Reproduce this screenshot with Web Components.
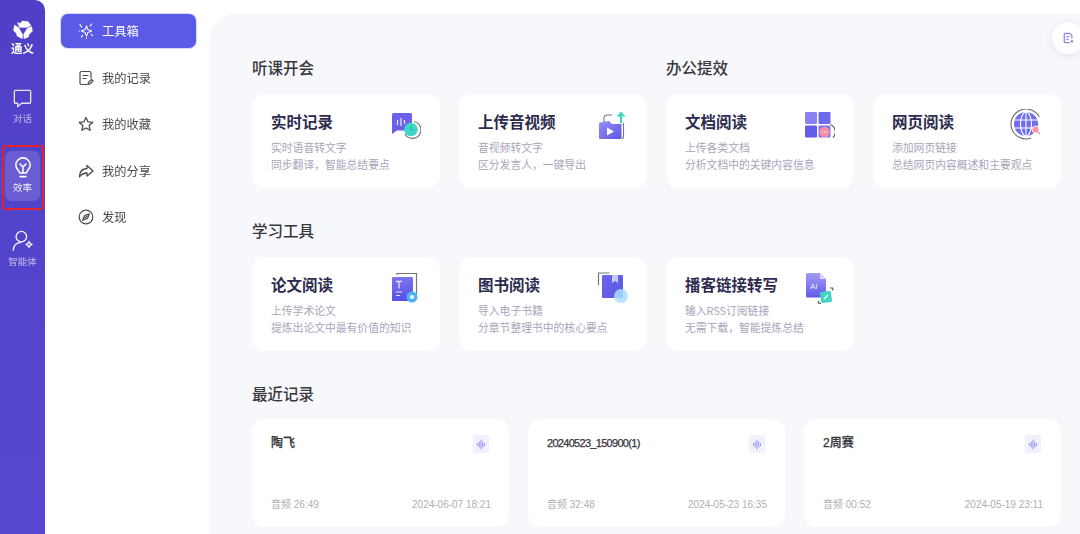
<!DOCTYPE html>
<html lang="zh">
<head>
<meta charset="utf-8">
<title>通义 效率</title>
<style>
  html, body { margin: 0; height: 534px; overflow: hidden; background: #fff; }
  body { font-family: "Noto Sans CJK SC", "Noto Sans", sans-serif; }
  svg { display: block; }
</style>
</head>
<body>
<app-shell>
  <app-rail slot="rail">
    <rail-item>
      <svg slot="icon" width="23" height="23" viewBox="0 0 24 24" fill="none" stroke="#fff" stroke-width="1.400" stroke-linejoin="round" opacity=".85"><path d="M4 4.500a1 1 0 0 1 1-1h15a1 1 0 0 1 1 1V16a1 1 0 0 1-1 1H11.500L7.500 20.500V17H5a1 1 0 0 1-1-1Z" transform="translate(-.5 0)"/></svg>
      对话
    </rail-item>
    <rail-item active>
      <svg slot="icon" width="24" height="24" viewBox="0 0 20 20" fill="none" stroke="#fff" stroke-width="1.300" stroke-linecap="round" stroke-linejoin="round"><path d="M7.200 15c0-1.700-3.200-3-3.200-6.600a6 6 0 0 1 12 0c0 3.600-3.200 4.900-3.200 6.600Z"/><path d="M7.500 7.500 10 10l2.500-2.500M10 10v5M7.500 18h5"/></svg>
      效率
    </rail-item>
    <rail-item style="margin-top:3px">
      <svg slot="icon" width="24" height="24" viewBox="0 0 22 22" fill="none" stroke="#fff" stroke-width="1.300" stroke-linecap="round" opacity=".9"><circle cx="9.500" cy="7" r="4.800"/><path d="M2 19.500c.3-4.200 3.200-6.800 7-7.200"/><path d="M16.500 11.500c.4 1.700 1 2.300 2.700 2.700-1.700.4-2.300 1-2.700 2.700-.4-1.700-1-2.300-2.700-2.700 1.700-.4 2.300-1 2.700-2.700Z" stroke-linejoin="round"/></svg>
      智能体
    </rail-item>
  </app-rail>

  <side-nav slot="nav">
    <nav-item active>
      <svg slot="icon" width="16" height="16" viewBox="0 0 17 17" fill="none" stroke="#fff" stroke-width="1.100" stroke-linecap="round" stroke-linejoin="round"><path d="m9 3 1.500 4 4 1.500-4 1.500L9 14l-1.500-4-4-1.500 4-1.500Z"/><path d="M2 1.500 4 4.500M14.500 1 13 3M1 8.500h.5M15.500 13.500 14 12M3.500 15l1.500-2M9 16v.5"/></svg>
      工具箱
    </nav-item>
    <nav-item>
      <svg slot="icon" width="16" height="16" viewBox="0 0 16 16" fill="none" stroke="#4a4a52" stroke-width="1.200" stroke-linecap="round" stroke-linejoin="round"><path d="M9 14.500H3.500a1.500 1.500 0 0 1-1.500-1.500V3a1.500 1.500 0 0 1 1.500-1.500h8A1.500 1.500 0 0 1 13 3v5"/><path d="M5 5.500h5M5 8.500h3M10 14.500l.5-2 3-3 1.500 1.500-3 3Z"/></svg>
      我的记录
    </nav-item>
    <nav-item>
      <svg slot="icon" width="16" height="16" viewBox="0 0 16 16" fill="none" stroke="#4a4a52" stroke-width="1.300" stroke-linejoin="round"><path d="m8 1.500 2 4.300 4.700.6-3.500 3.200.9 4.700L8 12l-4.100 2.300.9-4.700L1.300 6.400 6 5.800Z"/></svg>
      我的收藏
    </nav-item>
    <nav-item>
      <svg slot="icon" width="16" height="16" viewBox="0 0 16 16" fill="none" stroke="#4a4a52" stroke-width="1.300" stroke-linejoin="round" stroke-linecap="round"><path d="M9 2.500 15 8l-6 5v-3C6 10 3.500 11 1.500 14c0-5 3-8.200 7.500-8.500Z"/></svg>
      我的分享
    </nav-item>
    <nav-item>
      <svg slot="icon" width="16" height="16" viewBox="0 0 16 16" fill="none" stroke="#4a4a52" stroke-width="1.200" stroke-linejoin="round"><circle cx="8" cy="8" r="6.800"/><path d="M11.300 4.700 9.500 9.500 4.700 11.300 6.500 6.500Z"/><path d="M6.500 9.500 9.500 6.500"/></svg>
      发现
    </nav-item>
  </side-nav>

  <main-panel slot="main">
    <tool-grid>
      <section-title>听课开会</section-title>
      <section-title style="grid-column:3 / span 2">办公提效</section-title>

      <tool-card heading="实时记录">
        <svg slot="icon" width="32" height="32" viewBox="0 0 32 32" fill="none">
          <path d="M4.500 4h17A1.500 1.500 0 0 1 23 5.500V20a1.500 1.500 0 0 1-1.500 1.500H8L3 25V5.500A1.500 1.500 0 0 1 4.500 4Z" fill="#6d5fe8"/>
          <path d="M8.500 11v5M12 9v8M15.500 11v4" stroke="#fff" stroke-width="1.200" opacity=".85"/>
          <path d="M25 12.500a8.500 8.500 0 1 1-9 12.500" stroke="#77777a" stroke-width="1.200"/>
          <circle cx="22" cy="20.500" r="6.800" fill="#3fd8c6"/>
          <path d="M22 16.500v4.200l2.500 1.300" stroke="#23a69e" stroke-width=".9"/>
        </svg>
        <span>实时语音转文字</span>
        <span>同步翻译，智能总结要点</span>
      </tool-card>

      <tool-card heading="上传音视频">
        <svg slot="icon" width="32" height="32" viewBox="0 0 32 32" fill="none">
          <defs><linearGradient id="pv" x1="0" y1="0" x2="1" y2="1"><stop offset="0" stop-color="#9a8ff5"/><stop offset="1" stop-color="#5c55e6"/></linearGradient></defs>
          <path d="M4 13.500 13 12l3 3h9.500v13.500A1.500 1.500 0 0 1 24 30H4.500A1.500 1.500 0 0 1 3 28.500V14.500A1 1 0 0 1 4 13.500Z" fill="url(#pv)"/>
          <path d="M8 13V9.500A3.500 3.500 0 0 1 11.500 6H16M27.500 14v13.500a2 2 0 0 1-2 2" stroke="#77777a" stroke-width="1.100"/>
          <path d="m11 18.500 7 4-7 4Z" fill="#fff"/>
          <path d="M25 14V5" stroke="#3fd6c4" stroke-width="2.200"/><path d="m20.500 7.500 4.500-5 4.500 5Z" fill="#3fd6c4"/>
        </svg>
        <span>音视频转文字</span>
        <span>区分发言人，一键导出</span>
      </tool-card>

      <tool-card heading="文档阅读">
        <svg slot="icon" width="32" height="32" viewBox="0 0 32 32" fill="none">
          <rect x="2" y="3" width="12" height="12" rx="1.200" fill="#8782f0"/>
          <rect x="15.500" y="3" width="12" height="12" rx="1.200" fill="#6f6aec"/>
          <rect x="2" y="16.500" width="12" height="12" rx="1.200" fill="#625de8"/>
          <rect x="15.500" y="16.500" width="12" height="12" rx="1.200" fill="#7b78ee"/>
          <path d="M24.500 15.500a8 8 0 0 1 2.500 13" stroke="#55555c" stroke-width="1.100" transform="translate(3 0)"/>
          <circle cx="21.500" cy="23" r="5.200" fill="#fb8fa6"/>
          <path d="M19 23h1M21 23h1M23 23h1" stroke="#fff" stroke-width="1.100"/>
        </svg>
        <span>上传各类文档</span>
        <span>分析文档中的关键内容信息</span>
      </tool-card>

      <tool-card heading="网页阅读">
        <svg slot="icon" width="32" height="32" viewBox="0 0 32 32" fill="none">
          <circle cx="16" cy="15" r="15" stroke="#6a6a70" stroke-width="1.100" stroke-dasharray="68 26" transform="rotate(70 16 15)"/>
          <circle cx="16" cy="15" r="12" fill="#6f6cee"/>
          <ellipse cx="16" cy="15" rx="5.500" ry="12" stroke="#fff" stroke-width="1.100"/>
          <path d="M16 3v24M4.500 11h23M4.500 19h23" stroke="#fff" stroke-width="1.100"/>
          <circle cx="25.500" cy="20.500" r="3.500" fill="#fb8fa6" stroke="#fff" stroke-width=".8"/>
          <path d="m28 23 2 2" stroke="#fb8fa6" stroke-width="1.300"/>
        </svg>
        <span>添加网页链接</span>
        <span>总结网页内容概述和主要观点</span>
      </tool-card>

      <section-title class="gap">学习工具</section-title>

      <tool-card heading="论文阅读">
        <svg slot="icon" width="32" height="32" viewBox="0 0 32 32" fill="none">
          <defs><linearGradient id="pd" x1="0" y1="0" x2="0" y2="1"><stop offset="0" stop-color="#7c74ee"/><stop offset="1" stop-color="#5750e2"/></linearGradient></defs>
          <path d="M8 3V1.500h19.500V22" stroke="#77777a" stroke-width="1.200"/>
          <rect x="3" y="5" width="21" height="24" rx="1" fill="url(#pd)"/>
          <path d="M7 9.500h6M10 9.500v7" stroke="#fff" stroke-width="1.300" opacity=".8"/>
          <path d="M7 20h6M7 23.500h4" stroke="#fff" stroke-width="1.100" opacity=".8"/>
          <circle cx="23" cy="25" r="5.500" fill="#4db6f2"/>
          <circle cx="23" cy="25" r="2" fill="#fff"/>
        </svg>
        <span>上传学术论文</span>
        <span>提炼出论文中最有价值的知识</span>
      </tool-card>

      <tool-card heading="图书阅读">
        <svg slot="icon" width="32" height="32" viewBox="0 0 32 32" fill="none">
          <defs><linearGradient id="pb" x1="0" y1="0" x2="1" y2="1"><stop offset="0" stop-color="#6a66ec"/><stop offset="1" stop-color="#5d57e4"/></linearGradient></defs>
          <path d="M2.500 13V1h11" stroke="#77777a" stroke-width="1.200"/>
          <rect x="6" y="3" width="21" height="23" rx="1" fill="url(#pb)"/>
          <path d="M16 3h6v8l-3-2-3 2Z" fill="#c9c7fa"/>
          <circle cx="25" cy="24" r="7" fill="#a9defe" opacity=".85"/>
        </svg>
        <span>导入电子书籍</span>
        <span>分章节整理书中的核心要点</span>
      </tool-card>

      <tool-card heading="播客链接转写">
        <svg slot="icon" width="32" height="32" viewBox="0 0 32 32" fill="none">
          <defs><linearGradient id="pa" x1="0" y1="0" x2="0" y2="1"><stop offset="0" stop-color="#a49cf6"/><stop offset="1" stop-color="#615ae6"/></linearGradient></defs>
          <path d="M4.500 1H17l6 6v17a1.500 1.500 0 0 1-1.500 1.500h-17A1.500 1.500 0 0 1 3 24V2.500A1.500 1.500 0 0 1 4.500 1Z" fill="url(#pa)"/>
          <path d="M17 1v6h6Z" fill="#d9d6fb"/>
          <rect x="17.500" y="19.500" width="11" height="11" rx="1.500" fill="#44d4c2" transform="rotate(-8 23 25)"/>
          <path d="m21 27 4-4" stroke="#fff" stroke-width="1.300"/>
          <path d="M27 16h2.500l.5 2.500M18 31.500l-2.500-.5V29" stroke="#55555c" stroke-width="1.200"/>
          <text x="7" y="17" fill="#fff" font-size="8" font-family="Liberation Sans" opacity=".9">AI</text>
        </svg>
        <span>输入RSS订阅链接</span>
        <span>无需下载，智能提炼总结</span>
      </tool-card>
    </tool-grid>

    <section-title class="gap-recent">最近记录</section-title>
    <recent-list>
      <recent-card name="陶飞" length="26:49" date="2024-06-07 18:21"></recent-card>
      <recent-card name="20240523_150900(1)" length="32:48" date="2024-05-23 16:35" style="--name-size:11px;--name-spacing:-.7px"></recent-card>
      <recent-card name="2周赛" length="00:52" date="2024-05-19 23:11"></recent-card>
    </recent-list>

    <float-button>
      <svg width="11" height="12" viewBox="0 0 13 13" fill="none" stroke="#8b80f2" stroke-width="1.500" stroke-linejoin="round"><path d="M8 12H2.500a1 1 0 0 1-1-1V2a1 1 0 0 1 1-1H8l2.500 2.500V7"/><path d="M4 5h3.500M4 8h2.500M10.500 9v3M9 10.500h3"/></svg>
    </float-button>
  </main-panel>
</app-shell>

<script>
class AppShell extends HTMLElement {
  constructor() {
    super();
    this.attachShadow({ mode: "open" });
    this.shadowRoot.innerHTML = `
      <style>
        :host {
          display: grid;
          grid-template-columns: 46px 164px 1fr;
          width: 1080px;
          height: 534px;
          overflow: hidden;
          filter: blur(.45px);
        }
      </style>
      <slot name="rail"></slot>
      <slot name="nav"></slot>
      <slot name="main"></slot>
    `;
  }
}

class AppRail extends HTMLElement {
  constructor() {
    super();
    this.attachShadow({ mode: "open" });
    this.shadowRoot.innerHTML = `
      <style>
        :host {
          display: flex;
          flex-direction: column;
          align-items: center;
          gap: 20px;
          width: 45px;
          height: 534px;
          box-sizing: border-box;
          background: linear-gradient(180deg, #5040c8, #5648d0);
          border-top-right-radius: 10px;
        }
        .logo {
          height: 61px;
          display: flex;
          flex-direction: column;
          align-items: center;
          padding-top: 20px;
          box-sizing: border-box;
          color: #fff;
          font-size: 11.5px;
          font-weight: 700;
          line-height: 14px;
          gap: 1px;
        }
      </style>
      <div class="logo">
        <svg width="20" height="20" viewBox="0 0 20 20" fill="#fff" stroke="#fff" stroke-width=".4" stroke-linejoin="round">
          <path d="M4.500 2.500 7.500 3.500 9 1l6 .5 3 4-4.500 2h-7Z"/>
          <path d="M18.500 6.500 19.500 11 16 14.500 15.500 17 11 18.800l-.4-4.500 3.900-6.300Z"/>
          <path d="M1.500 5 .5 10.500 3.500 13.500 4 16l5.300 2.800.3-4.300-4-7Z"/>
        </svg>
        <span>通义</span>
      </div>
      <slot></slot>
    `;
  }
}

class RailItem extends HTMLElement {
  constructor() {
    super();
    this.attachShadow({ mode: "open" });
    this.shadowRoot.innerHTML = `
      <style>
        :host {
          display: flex;
          flex-direction: column;
          align-items: center;
          position: relative;
          width: 35px;
          height: 50px;
          box-sizing: border-box;
          padding-top: 6px;
          border-radius: 7px;
          font-size: 9.5px;
          line-height: 12px;
          color: rgba(255,255,255,.62);
          white-space: nowrap;
        }
        .icon { height: 22px; display: flex; align-items: center; margin-bottom: 3px; }
        :host([active]) { background: rgba(255,255,255,.14); color: rgba(255,255,255,.9); padding-top: 5px; }
        .mark { display: none; }
        :host([active]) .mark {
          display: block;
          position: absolute;
          left: -3px;
          top: -6px;
          width: 38px;
          height: 61px;
          border: 2px solid #e2222e;
          border-radius: 4px;
        }
      </style>
      <div class="icon"><slot name="icon"></slot></div>
      <slot></slot>
      <div class="mark"></div>
    `;
  }
}

class SideNav extends HTMLElement {
  constructor() {
    super();
    this.attachShadow({ mode: "open" });
    this.shadowRoot.innerHTML = `
      <style>
        :host {
          display: flex;
          flex-direction: column;
          gap: 12.5px;
          box-sizing: border-box;
          padding: 14px 14px 0 15px;
          background: #fff;
        }
      </style>
      <slot></slot>
    `;
  }
}

class NavItem extends HTMLElement {
  constructor() {
    super();
    this.attachShadow({ mode: "open" });
    this.shadowRoot.innerHTML = `
      <style>
        :host {
          display: flex;
          align-items: center;
          gap: 8px;
          height: 34px;
          box-sizing: border-box;
          padding-left: 17px;
          border-radius: 7px;
          font-size: 12.25px;
          color: #46464e;
        }
        :host([active]) {
          background: #5b5ae6;
          box-shadow: 0 0 0 1px #d9d8fa;
          color: #fff;
        }
      </style>
      <slot name="icon"></slot>
      <slot></slot>
    `;
  }
}

class MainPanel extends HTMLElement {
  constructor() {
    super();
    this.attachShadow({ mode: "open" });
    this.shadowRoot.innerHTML = `
      <style>
        :host {
          display: block;
          position: relative;
          margin-top: 14px;
          padding: 43px 19px 0 42px;
          height: 520px;
          box-sizing: border-box;
          background: #f7f8fc;
          border-top-left-radius: 24px;
        }
      </style>
      <slot></slot>
    `;
  }
}

class ToolGrid extends HTMLElement {
  constructor() {
    super();
    this.attachShadow({ mode: "open" });
    this.shadowRoot.innerHTML = `
      <style>
        :host {
          display: grid;
          grid-template-columns: repeat(4, 188px);
          column-gap: 19px;
        }
        ::slotted(section-title) { margin-bottom: 17px; }
        ::slotted(.gap) { grid-column: 1 / -1; margin-top: 32px; }
      </style>
      <slot></slot>
    `;
  }
}

class SectionTitle extends HTMLElement {
  constructor() {
    super();
    this.attachShadow({ mode: "open" });
    this.shadowRoot.innerHTML = `
      <style>
        :host {
          display: block;
          font-size: 15.5px;
          font-weight: 500;
          line-height: 20px;
          color: #37373d;
        }
        :host(.gap-recent) { margin: 32px 0 16px; }
      </style>
      <slot></slot>
    `;
  }
}

class ToolCard extends HTMLElement {
  constructor() {
    super();
    this.attachShadow({ mode: "open" });
    this.shadowRoot.innerHTML = `
      <style>
        :host {
          display: flex;
          height: 94px;
          box-sizing: border-box;
          padding: 15px 19px 0 19px;
          background: #fff;
          border-radius: 13px;
        }
        .text { flex: 1; min-width: 0; }
        .title {
          font-size: 15.5px;
          font-weight: 700;
          line-height: 20px;
          margin-top: 2px;
          margin-bottom: 8px;
          color: #2d2b4e;
          white-space: nowrap;
        }
        .desc {
          display: flex;
          flex-direction: column;
          font-size: 10.8px;
          line-height: 17px;
          color: #a6a6ba;
          white-space: nowrap;
        }
        .icon { width: 32px; height: 32px; flex: none; }
      </style>
      <div class="text">
        <div class="title"></div>
        <div class="desc"><slot></slot></div>
      </div>
      <div class="icon"><slot name="icon"></slot></div>
    `;
  }
  connectedCallback() {
    this.shadowRoot.querySelector(".title").textContent = this.getAttribute("heading");
  }
}

class RecentList extends HTMLElement {
  constructor() {
    super();
    this.attachShadow({ mode: "open" });
    this.shadowRoot.innerHTML = `
      <style>
        :host {
          display: grid;
          grid-template-columns: repeat(3, 257px);
          column-gap: 19px;
        }
      </style>
      <slot></slot>
    `;
  }
}

class RecentCard extends HTMLElement {
  constructor() {
    super();
    this.attachShadow({ mode: "open" });
    this.shadowRoot.innerHTML = `
      <style>
        :host {
          display: flex;
          flex-direction: column;
          justify-content: space-between;
          height: 108px;
          box-sizing: border-box;
          padding: 16px 18px 16px 19px;
          background: #fff;
          border-radius: 13px;
          font-family: "Liberation Sans", "Noto Sans CJK SC", sans-serif;
        }
        .top { display: flex; justify-content: space-between; align-items: flex-start; }
        .name {
          font-size: var(--name-size, 12px);
          font-weight: 500;
          line-height: 17px;
          color: #34343a;
          letter-spacing: var(--name-spacing, 0);
          -webkit-text-stroke: .25px #34343a;
        }
        .wave {
          width: 16px;
          height: 18px;
          margin-right: 2px;
          background: #f1f1fd;
          border-radius: 2px;
          display: flex;
          align-items: center;
          justify-content: center;
        }
        .meta {
          display: flex;
          justify-content: space-between;
          font-size: 10px;
          line-height: 13px;
          color: #aeaeb9;
        }
      </style>
      <div class="top">
        <div class="name"></div>
        <div class="wave">
          <svg width="10" height="11" viewBox="0 0 10 11" stroke="#a09bf3" stroke-width="1.100" stroke-linecap="round"><path d="M1.500 4.500v2M3.300 3v5M5 1v9M6.700 3v5M8.500 4.500v2"/></svg>
        </div>
      </div>
      <div class="meta"><span class="len"></span><span class="date"></span></div>
    `;
  }
  connectedCallback() {
    this.shadowRoot.querySelector(".name").textContent = this.getAttribute("name");
    this.shadowRoot.querySelector(".len").textContent = "音频 " + this.getAttribute("length");
    this.shadowRoot.querySelector(".date").textContent = this.getAttribute("date");
  }
}

class FloatButton extends HTMLElement {
  constructor() {
    super();
    this.attachShadow({ mode: "open" });
    this.shadowRoot.innerHTML = `
      <style>
        :host {
          position: absolute;
          left: 842px;
          top: 8px;
          width: 32px;
          height: 32px;
          padding-left: 11px;
          box-sizing: border-box;
          display: flex;
          align-items: center;
          background: #fff;
          border-radius: 50%;
          box-shadow: 0 2px 8px rgba(90,90,140,.12);
        }
      </style>
      <slot></slot>
    `;
  }
}

customElements.define("app-shell", AppShell);
customElements.define("app-rail", AppRail);
customElements.define("rail-item", RailItem);
customElements.define("side-nav", SideNav);
customElements.define("nav-item", NavItem);
customElements.define("main-panel", MainPanel);
customElements.define("tool-grid", ToolGrid);
customElements.define("section-title", SectionTitle);
customElements.define("tool-card", ToolCard);
customElements.define("recent-list", RecentList);
customElements.define("recent-card", RecentCard);
customElements.define("float-button", FloatButton);
</script>
</body>
</html>
